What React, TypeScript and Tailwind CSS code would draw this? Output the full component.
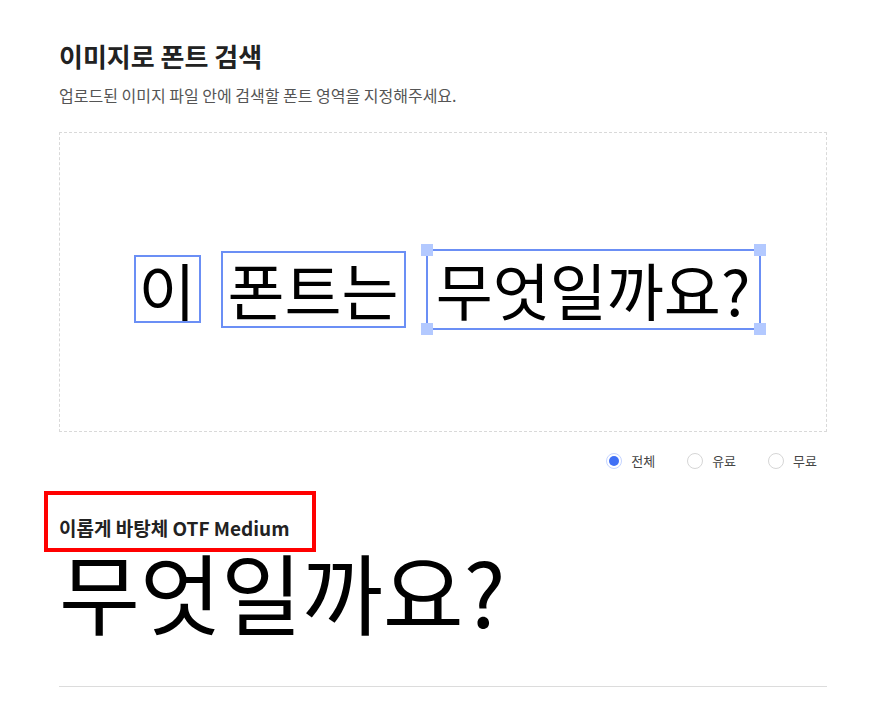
import React, { useState } from 'react';

const font = { fontFamily: '"Noto Sans CJK KR", "Noto Sans", sans-serif' };

const Handle = ({ pos }: { pos: string }) => (
  <span className={`absolute h-[12px] w-[12px] bg-[#b3c9ff] ${pos}`} />
);

const WordBox = ({ text, w, h, active }: { text: string; w: string; h: string; active?: boolean }) => (
  <div className={`relative flex items-center justify-center border-2 border-[#6b8ff5] ${w} ${h}`}>
    <span className="whitespace-nowrap text-[62px] leading-none text-black">{text}</span>
    {active && (
      <>
        <Handle pos="-left-[7px] -top-[7px]" />
        <Handle pos="-right-[7px] -top-[7px]" />
        <Handle pos="-left-[7px] -bottom-[7px]" />
        <Handle pos="-right-[7px] -bottom-[7px]" />
      </>
    )}
  </div>
);

const options = ['전체', '유료', '무료'];

const App = () => {
  const [selected, setSelected] = useState('전체');

  return (
    <div className="min-h-screen bg-white" style={font}>
      <div className="ml-[59px] w-[768px] pt-[40px]">
        <h1 className="text-[26px] font-bold leading-[32px] text-[#222]">이미지로 폰트 검색</h1>
        <p className="mt-[12px] text-[16px] leading-[22px] text-[#555]">
          업로드된 이미지 파일 안에 검색할 폰트 영역을 지정해주세요.
        </p>

        <div className="mt-[26px] flex h-[300px] items-center justify-center gap-[20px] border border-dashed border-[#d9d9d9] pl-[8px] pt-[14px]">
          <WordBox text="이" w="w-[67px]" h="h-[68px]" />
          <WordBox text="폰트는" w="w-[185px]" h="h-[77px]" />
          <WordBox text="무엇일까요?" w="w-[335px]" h="h-[81px]" active />
        </div>

        <div className="mt-[19px] flex justify-end gap-[32px] pr-[10px]">
          {options.map((o) => (
            <label key={o} className="flex h-[20px] cursor-pointer items-center gap-[9px]" onClick={() => setSelected(o)}>
              {selected === o ? (
                <span className="flex h-[16px] w-[16px] shrink-0 items-center justify-center rounded-full border border-[#c5d4ff]">
                  <span className="h-[10px] w-[10px] rounded-full bg-[#3f6ff5]" />
                </span>
              ) : (
                <span className="h-[16px] w-[16px] shrink-0 rounded-full border border-[#d6d6d6]" />
              )}
              <span className="text-[13px] text-[#444]">{o}</span>
            </label>
          ))}
        </div>

        <div className="relative mt-[45px] w-fit">
          <p className="text-[19px] font-bold leading-[24px] text-[#222]">이롭게 바탕체 OTF Medium</p>
          <span className="absolute -left-[15px] -top-[25px] h-[61px] w-[272px] border-[4px] border-[#ff0000]" />
        </div>

        <p className="mt-[6px] text-[88px] leading-none text-black">무엇일까요?</p>

        <div className="mt-[52px] h-px bg-[#dcdcdc]" />
      </div>
    </div>
  );
};

export default App;
